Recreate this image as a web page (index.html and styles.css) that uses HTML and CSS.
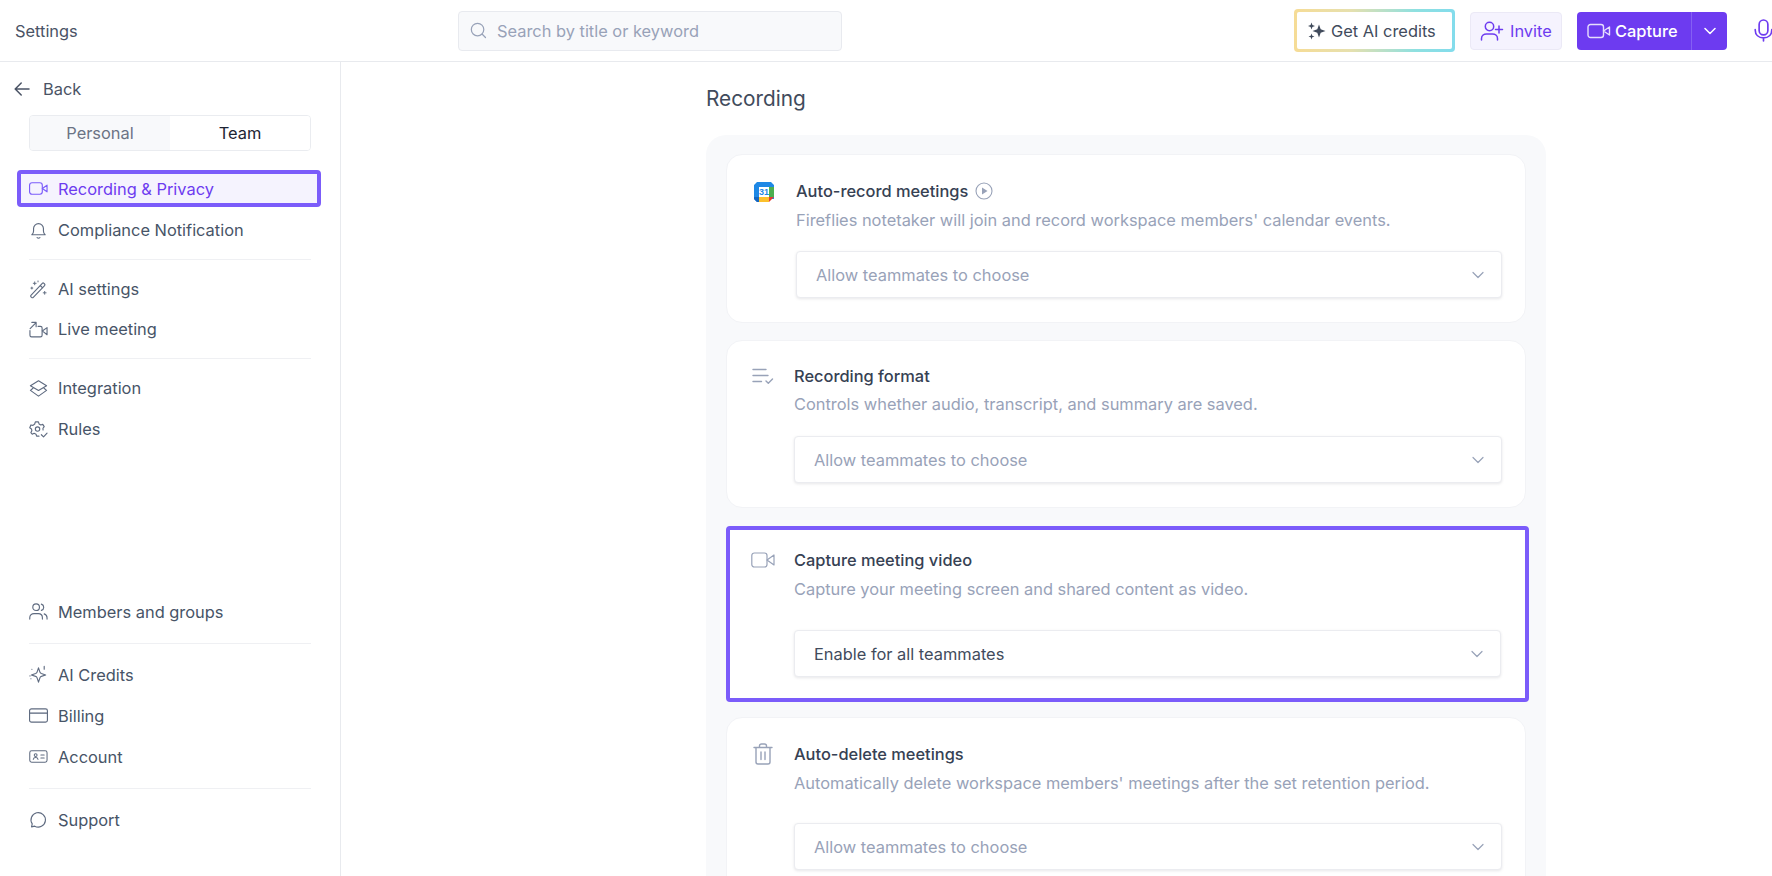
FILE: index.html
```html
<!DOCTYPE html>
<html lang="en">
<head>
<meta charset="utf-8">
<title>Settings</title>
<link rel="stylesheet" href="styles.css">
</head>
<body>
<div class="app">
  <header class="topbar">
    <div class="page-title">Settings</div>
    <div class="search">
      <svg class="search-ic" viewBox="0 0 18 18" fill="none" stroke="currentColor" stroke-width="1.3" stroke-linecap="round"><circle cx="8" cy="8" r="6.6"/><path d="M13 13l3.4 3.4"/></svg>
      <span>Search by title or keyword</span>
    </div>
    <div class="actions">
      <div class="credits">
        <div class="credits-in">
          <svg class="ic20" viewBox="0 0 20 20" fill="#414b5c"><path d="M12 3.500l1.700 4.800 4.800 1.700-4.800 1.700-1.700 4.800-1.700-4.800L5.500 10l4.800-1.700z"/><path d="M4.500 1.500l.9 2.600 2.600.9-2.600.9-.9 2.600-.9-2.600L1 5l2.600-.9z"/><path d="M4.500 12.500l.8 2.200 2.200.8-2.200.8-.8 2.200-.8-2.200-2.200-.8 2.200-.8z"/></svg>
          <span>Get AI credits</span>
        </div>
      </div>
      <div class="invite">
        <svg class="ic24" viewBox="0 0 24 24" fill="none" stroke="currentColor" stroke-width="1.5" stroke-linecap="round"><circle cx="9.500" cy="7.500" r="4.200"/><path d="M1.500 21v-1.500c0-3 2.500-4.500 5-4.500h6c2.500 0 5 1.500 5 4.500V21"/><path d="M19 7v7M15.500 10.500h7"/></svg>
        <span>Invite</span>
      </div>
      <div class="capture">
        <div class="capture-main">
          <svg class="cam-btn" viewBox="0 0 24 16" fill="none" stroke="currentColor" stroke-width="1.400" stroke-linejoin="round"><rect x="1" y="1.500" width="15.500" height="13" rx="2.500"/><path d="M16.500 8l6-4v8z"/></svg>
          <span>Capture</span>
        </div>
        <div class="capture-caret">
          <svg class="caret" viewBox="0 0 12 8" fill="none" stroke="currentColor" stroke-width="1.500" stroke-linecap="round" stroke-linejoin="round"><path d="M1 1.500l5 5 5-5"/></svg>
        </div>
      </div>
      <svg class="mic" viewBox="0 0 24 26" fill="none" stroke="currentColor" stroke-width="1.900" stroke-linecap="round"><rect x="7" y="1" width="10" height="17" rx="5"/><path d="M2.500 12c0 6 4 9.500 9.500 9.500s9.500-3.500 9.500-9.500M12 21.500V25"/></svg>
    </div>
  </header>

  <div class="layout">
    <aside class="sidebar">
      <div class="back">
        <svg class="back-ic" viewBox="0 0 16 14" fill="none" stroke="currentColor" stroke-width="1.500" stroke-linecap="round" stroke-linejoin="round"><path d="M15 7H1.500M7.200 1L1.200 7l6 6"/></svg>
        <span>Back</span>
      </div>
      <div class="tabs">
        <div class="tab">Personal</div>
        <div class="tab tab-on">Team</div>
      </div>
      <nav class="nav">
        <div class="item item-on">
          <svg class="ic" viewBox="0 0 20 14" fill="none" stroke="currentColor" stroke-width="1.200" stroke-linejoin="round"><rect x=".6" y="1" width="13.400" height="12" rx="2.500"/><path d="M14 7l5-3.500v7z"/></svg>
          <span>Recording &amp; Privacy</span>
        </div>
        <div class="item">
          <svg class="ic" viewBox="0 0 20 20" fill="none" stroke="currentColor" stroke-width="1.200" stroke-linecap="round" stroke-linejoin="round"><path d="M3 14.500c1.200-1 1.800-2 1.800-4V8a5.200 5.200 0 0 1 10.400 0v2.500c0 2 .6 3 1.800 4z"/><path d="M8.500 17.500c.8.700 2.200.700 3 0"/></svg>
          <span>Compliance Notification</span>
        </div>
        <hr class="rule rule-a">
        <div class="item">
          <svg class="ic" viewBox="0 0 20 20" fill="none" stroke="currentColor" stroke-width="1.200" stroke-linecap="round" stroke-linejoin="round"><path d="M2 16.300L14 3.500c.5-.5 1.200-.5 1.700 0l.7.7c.5.500.5 1.200 0 1.700L4.500 18.300c-.5.500-1.200.5-1.700 0l-.8-.7c-.4-.4-.4-.9 0-1.300zM11.800 5.800l2.500 2.500"/><path d="M6 2v3M4.500 3.500h3M3 7.500v2M2 8.500h2M16.500 12v3M15 13.500h3M9.500 1v1" stroke-width="1"/></svg>
          <span>AI settings</span>
        </div>
        <div class="item">
          <svg class="ic" viewBox="0 0 20 18" fill="none" stroke="currentColor" stroke-width="1.200" stroke-linecap="round" stroke-linejoin="round"><path d="M1 10v5c0 1 .7 1.800 1.700 1.800H12c1 0 1.800-.8 1.800-1.800V7.500c0-1-.8-1.800-1.800-1.800H9.500"/><path d="M14 10.500l5-3.500v7.500zM1.200 8L7.200 2M3 1.500h4.500V6"/></svg>
          <span>Live meeting</span>
        </div>
        <hr class="rule rule-b">
        <div class="item">
          <svg class="ic" viewBox="0 0 20 20" fill="none" stroke="currentColor" stroke-width="1.200" stroke-linejoin="round"><path d="M10 1.800l8.500 5.200L10 12 1.500 7z"/><path d="M4.500 9.500L1.500 12l8.500 6 8.500-6-3-2.500"/></svg>
          <span>Integration</span>
        </div>
        <div class="item item-rules">
          <svg class="ic" viewBox="0 0 20 20" fill="none" stroke="currentColor" stroke-width="1.200" stroke-linecap="round" stroke-linejoin="round"><circle cx="9" cy="9.500" r="2.300"/><path d="M10.500 17H8l-.6-2.100-2-.9-2 1L2 13.200l1-1.900-.4-1.900L.8 8.200l1.200-3 2.200.5L6 4.200 6.700 2h3.200l.7 2.100 1.800 1.100 2.100-.6 1.500 2.400-1.300 1.700.1 1.800"/><path d="M13 15.500l2.300 2.300 3.700-4"/></svg>
          <span>Rules</span>
        </div>
        <div class="nav-spacer"></div>
        <div class="item item-tall">
          <svg class="ic" viewBox="0 0 20 20" fill="none" stroke="currentColor" stroke-width="1.200" stroke-linecap="round"><circle cx="7.500" cy="5.500" r="3.500"/><path d="M.8 18v-1.500c0-2.500 2-4.300 4.500-4.300h4.500c2.500 0 4.300 1.800 4.300 4.300V18M13 2.200c1.600.5 2.500 1.800 2.500 3.300S14.600 8.300 13 8.800M16 12.500c1.800.7 3 2 3 4V18"/></svg>
          <span>Members and groups</span>
        </div>
        <hr class="rule rule-c">
        <div class="item item-tall">
          <svg class="ic" viewBox="0 0 20 20" fill="none" stroke="currentColor" stroke-width="1.200" stroke-linejoin="round" stroke-linecap="round"><path d="M10 3l1.500 4.500c.2.700.8 1.200 1.500 1.500L17.500 10.500 13 12c-.7.200-1.300.8-1.500 1.500L10 18l-1.500-4.500c-.2-.7-.8-1.300-1.500-1.500l-4.500-1.500L7 9c.7-.3 1.300-.8 1.500-1.500z"/><path d="M16 1.500v3M2 14.500h.1M3 4.500h.1M1 11.500h.1"/></svg>
          <span>AI Credits</span>
        </div>
        <div class="item item-tall">
          <svg class="ic" viewBox="0 0 20 16" fill="none" stroke="currentColor" stroke-width="1.200"><rect x=".6" y="1" width="18.800" height="14" rx="2"/><path d="M.6 5.500h18.800" stroke-width="1.400"/></svg>
          <span>Billing</span>
        </div>
        <div class="item item-tall">
          <svg class="ic" viewBox="0 0 20 14" fill="none" stroke="currentColor" stroke-width="1.100" stroke-linecap="round"><rect x=".8" y="1" width="18.200" height="12" rx="2"/><circle cx="7" cy="5.500" r="1.500"/><path d="M4.500 10c.3-1.500 1.200-2 2.500-2s2.200.5 2.500 2M12.500 5.500h3.500M12.500 8.500h3.500"/></svg>
          <span>Account</span>
        </div>
        <hr class="rule rule-d">
        <div class="item item-tall">
          <svg class="ic" viewBox="0 0 20 20" fill="none" stroke="currentColor" stroke-width="1.200" stroke-linejoin="round"><path d="M2.700 17.800l.7-3.200A7.600 7.600 0 1 1 6 17z"/></svg>
          <span>Support</span>
        </div>
      </nav>
    </aside>

    <main class="main">
      <h1 class="heading">Recording</h1>
      <section class="panel">
        <article class="card card-a">
          <svg class="card-ic gcal" viewBox="0 0 20 20"><path d="M3 0h14l3 3v14h-5l-2 3H3l-3-3V3z" fill="#1e88e5"/><path d="M15 15h5V5h-5z" fill="#4caf50"/><path d="M5 15h10v5H5z" fill="#fbc02d"/><path d="M15 15h5l-5 5z" fill="#e53935"/><path d="M0 15h5v5H3l-3-3z" fill="#1565c0"/><rect x="5" y="5" width="10" height="10" fill="#fff"/><text x="10" y="13.300" text-anchor="middle" class="gcal-num">31</text></svg>
          <div class="body">
            <div class="title">Auto-record meetings
              <svg class="play" viewBox="0 0 18 18" fill="none" stroke="#98a2b8" stroke-width="1.100"><circle cx="9" cy="9" r="8"/><path d="M7 5.500l5.500 3.500L7 12.500z" fill="#98a2b8" stroke="none"/></svg>
            </div>
            <p class="desc desc-5">Fireflies notetaker will join and record workspace members' calendar events.</p>
            <div class="select select-a muted"><span>Allow teammates to choose</span><svg class="chev" viewBox="0 0 12 8" fill="none" stroke="currentColor" stroke-width="1.200" stroke-linecap="round" stroke-linejoin="round"><path d="M1 1.500l5 5 5-5"/></svg></div>
          </div>
        </article>

        <article class="card card-b">
          <svg class="card-ic list" viewBox="0 0 22 17" fill="none" stroke="#98a2b8" stroke-width="1.400" stroke-linecap="round" stroke-linejoin="round"><path d="M1 1.500h13M1 7.500h15M1 13.500h8.500M14 13l2.300 2.300L20.500 11"/></svg>
          <div class="body">
            <div class="title">Recording format</div>
            <p class="desc desc-4">Controls whether audio, transcript, and summary are saved.</p>
            <div class="select select-b muted"><span>Allow teammates to choose</span><svg class="chev" viewBox="0 0 12 8" fill="none" stroke="currentColor" stroke-width="1.200" stroke-linecap="round" stroke-linejoin="round"><path d="M1 1.500l5 5 5-5"/></svg></div>
          </div>
        </article>

        <article class="card card-c">
          <svg class="card-ic cam" viewBox="0 0 24 16" fill="none" stroke="#98a2b8" stroke-width="1.200" stroke-linejoin="round"><rect x=".8" y="1" width="15.200" height="14" rx="2.500"/><path d="M16 8l7-5v10z"/></svg>
          <div class="body">
            <div class="title">Capture meeting video</div>
            <p class="desc desc-5">Capture your meeting screen and shared content as video.</p>
            <div class="select select-c"><span>Enable for all teammates</span><svg class="chev" viewBox="0 0 12 8" fill="none" stroke="currentColor" stroke-width="1.200" stroke-linecap="round" stroke-linejoin="round"><path d="M1 1.500l5 5 5-5"/></svg></div>
          </div>
        </article>

        <article class="card card-d">
          <svg class="card-ic trash" viewBox="0 0 20 22" fill="none" stroke="#98a2b8" stroke-width="1.400" stroke-linecap="round" stroke-linejoin="round"><path d="M1 4.500h18M3 4.500V19c0 1.200.8 2 2 2h10c1.200 0 2-.8 2-2V4.500M6.500 4.500V3c0-1.200.8-2 2-2h3c1.200 0 2 .8 2 2v1.500M8 9v7.500M12 9v7.500"/></svg>
          <div class="body">
            <div class="title">Auto-delete meetings</div>
            <p class="desc desc-5">Automatically delete workspace members' meetings after the set retention period.</p>
            <div class="select select-d muted"><span>Allow teammates to choose</span><svg class="chev" viewBox="0 0 12 8" fill="none" stroke="currentColor" stroke-width="1.200" stroke-linecap="round" stroke-linejoin="round"><path d="M1 1.500l5 5 5-5"/></svg></div>
          </div>
        </article>
      </section>
    </main>
  </div>
</div>
</body>
</html>
```
FILE: styles.css
```css
* { box-sizing: border-box; }
html, body { margin: 0; height: 100%; overflow: hidden; background: #fff; }
body { font-family: Inter, "Liberation Sans", sans-serif; font-size: 16.4px; color: #475467; }

.app { display: flex; flex-direction: column; height: 876px; }

.topbar { height: 62px; flex: none; display: flex; align-items: center; border-bottom: 1px solid #e8eaee; padding-left: 15px; position: relative; }
.page-title { width: 443px; flex: none; color: #4a5365; }
.search { width: 384px; height: 40px; flex: none; display: flex; align-items: center; gap: 10px; padding-left: 11px; background: #f8f9fb; border: 1px solid #e8eaef; border-radius: 4px; color: #98a2b8; }
.search-ic { width: 17px; height: 17px; flex: none; }

.actions { margin-left: auto; display: flex; align-items: center; flex: none; width: 478px; }
.credits { width: 161px; height: 43px; padding: 3px; border-radius: 4px; background: linear-gradient(90deg, #f6dc96 0%, #e6e0ae 35%, #8fe0e0 75%, #83dcec 100%); flex: none; }
.credits-in { height: 100%; background: #fff; border-radius: 2px; display: flex; align-items: center; gap: 4px; padding-left: 10px; color: #414b5c; }
.ic20 { width: 20px; height: 20px; flex: none; }
.ic24 { width: 24px; height: 24px; flex: none; }
.invite { margin-left: 15px; width: 92px; height: 38px; flex: none; display: flex; align-items: center; gap: 6px; padding-left: 9px; background: #f5f3fe; border: 1px solid #ebe9f6; border-radius: 4px; color: #6d3bf0; }
.capture { margin-left: 15px; width: 150px; height: 38px; flex: none; display: flex; background: #6d3bf0; border-radius: 4px; color: #fff; font-weight: 500; }
.capture-main { width: 115px; display: flex; align-items: center; gap: 4px; padding-left: 10px; border-right: 1px solid #8460f3; flex: none; }
.cam-btn { width: 24px; height: 16px; flex: none; color: #e6defc; }
.capture-caret { flex: 1; display: flex; align-items: center; justify-content: center; }
.caret { width: 12px; height: 8px; }
.mic { width: 21px; height: 23px; flex: none; margin-left: 26px; color: #6d3bf0; }

.layout { flex: 1; display: flex; min-height: 0; }
.sidebar { width: 341px; flex: none; border-right: 1px solid #e8eaee; padding: 7px 0 0; display: flex; flex-direction: column; }
.back { height: 40px; display: flex; align-items: center; gap: 13px; padding-left: 14px; color: #4a5365; }
.back-ic { width: 16px; height: 14px; flex: none; }
.tabs { margin: 6px 29px 0; height: 36px; display: flex; border: 1px solid #eaecf0; border-radius: 4px; overflow: hidden; flex: none; }
.tab { flex: 1; display: flex; align-items: center; justify-content: center; color: #6b7385; background: #f8f9fb; }
.tab-on { background: #fff; color: #1d2433; }

.nav { flex: 1; display: flex; flex-direction: column; margin-top: 19px; padding-bottom: 36px; }
.item { height: 40px; margin: 0 19px 0 17px; padding-left: 12px; display: flex; align-items: center; gap: 10px; color: #475467; flex: none; }
.item .ic { width: 19px; height: 19px; flex: none; color: #5f6b80; }
.item-on { height: 37px; margin-bottom: 3px; padding-left: 8px; border: 4px solid #7b5cfa; border-radius: 4px; background: #f5f3fe; color: #6d3bf0; }
.item-on .ic { color: #7b5cfa; }
.item-rules { margin-top: 1px; }
.item-tall { height: 41px; }
.rule { border: 0; height: 1px; background: #eff0f3; flex: none; }
.rule-a { margin: 9px 29px 9px; }
.rule-b { margin: 9px 29px 9px; }
.rule-c { margin: 11px 29px 10px; }
.rule-d { margin: 11px 29px 10px; }
.nav-spacer { flex: 1; }

.main { flex: 1; min-width: 0; padding: 0 0 0 365px; }
.heading { margin: 20px 0 0; font-size: 20.8px; line-height: 34px; font-weight: 400; color: #414b5c; }
.panel { margin-top: 19px; width: 840px; background: #f8f9fb; border-radius: 20px; padding: 19px 20px 20px; display: flex; flex-direction: column; }

.card { width: 800px; background: #fff; border: 1px solid #f2f3f6; border-radius: 16px; display: flex; padding: 0 23px 24px 24px; }
.card-a { padding-top: 24px; }
.card-b { margin-top: 17px; padding-top: 23px; }
.card-c { margin-top: 18px; padding: 18px 24px 21px 21px; width: 803px; border: 4px solid #7b5cfa; border-radius: 4px; }
.card-d { margin-top: 15px; padding-top: 24px; }

.card-ic { flex: none; }
.gcal { width: 20px; height: 20px; margin: 3px 22px 0 3px; }
.gcal-num { font-size: 9px; font-weight: 700; fill: #1e88e5; font-family: "Liberation Sans", sans-serif; }
.list { width: 22px; height: 17px; margin: 4px 20px 0 1px; }
.cam { width: 24px; height: 16px; margin: 4px 19px 0 0; }
.trash { width: 20px; height: 22px; margin: 1px 21px 0 2px; }

.body { flex: 1; min-width: 0; }
.title { line-height: 24px; font-weight: 500; color: #364153; display: flex; align-items: center; gap: 7px; }
.play { width: 18px; height: 18px; flex: none; }
.desc { margin: 0; line-height: 24px; color: #98a2b8; }
.desc-4 { margin-top: 4px; }
.desc-5 { margin-top: 5px; }

.select { height: 47px; display: flex; align-items: center; justify-content: space-between; padding: 0 17px 0 19px; background: #fff; border: 1px solid #ebecf0; border-radius: 4px; box-shadow: 0 1px 3px rgba(16, 24, 40, .1); color: #414b5c; }
.muted { color: #98a2b8; }
.select-a { margin-top: 19px; }
.select-b { margin-top: 20px; }
.select-c { margin-top: 29px; }
.select-d { margin-top: 28px; }
.chev { width: 12px; height: 8px; flex: none; color: #98a2b8; }
```
